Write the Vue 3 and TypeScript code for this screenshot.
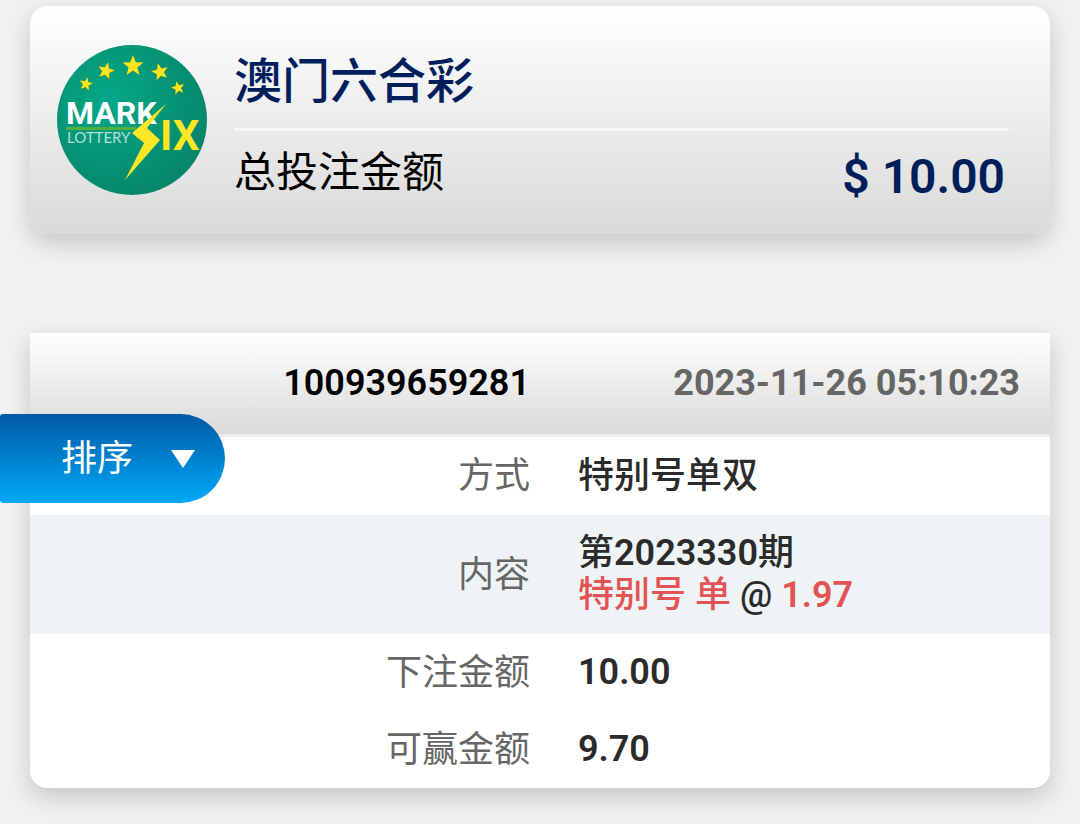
<script setup lang="ts">
interface Star {
  x: number
  y: number
  r: number
  turn: number
}

interface Part {
  text: string
  accent?: boolean
  figure?: boolean
}

interface Row {
  label: string
  lines: Part[][]
}

const stars: Star[] = [
  { x: 29, y: 39, r: 7, turn: 12 },
  { x: 49, y: 26, r: 9, turn: 14 },
  { x: 76, y: 21, r: 11, turn: 0 },
  { x: 103, y: 27, r: 9, turn: -14 },
  { x: 121, y: 43, r: 7, turn: -14 },
]

function starPoints(radius: number): string {
  return Array.from({ length: 10 }, (_, i) => {
    const r = i % 2 === 0 ? radius : radius * 0.42
    const a = (Math.PI * i) / 5 - Math.PI / 2
    return `${(r * Math.cos(a)).toFixed(2)},${(r * Math.sin(a)).toFixed(2)}`
  }).join(' ')
}

const rows: Row[] = [
  { label: '方式', lines: [[{ text: '特别号单双' }]] },
  {
    label: '内容',
    lines: [
      [{ text: '第' }, { text: '2023330', figure: true }, { text: '期' }],
      [
        { text: '特别号 单', accent: true },
        { text: ' @ ' },
        { text: '1.97', accent: true, figure: true },
      ],
    ],
  },
  { label: '下注金额', lines: [[{ text: '10.00', figure: true }]] },
  { label: '可赢金额', lines: [[{ text: '9.70', figure: true }]] },
]
</script>

<template>
  <main class="page">
    <section class="summary">
      <svg class="logo" viewBox="0 0 150 150" role="img" aria-label="Mark Six Lottery">
        <defs>
          <radialGradient id="disc" cx="0.35" cy="0.35" r="0.75">
            <stop offset="0" stop-color="#04a888" />
            <stop offset="1" stop-color="#068468" />
          </radialGradient>
        </defs>
        <circle cx="75" cy="75" r="75" fill="url(#disc)" />
        <polygon
          v-for="s in stars"
          :key="s.x"
          :points="starPoints(s.r)"
          :transform="`translate(${s.x} ${s.y}) rotate(${s.turn})`"
          class="star"
        />
        <text x="9" y="79" class="word-mark">MARK</text>
        <rect x="9" y="82" width="70" height="3" fill="#55ad3d" />
        <text x="10" y="98" class="word-lottery">LOTTERY</text>
        <path d="M109 59 75 88 87 98 68 135 103 95 90 83Z" class="bolt" />
        <text x="103" y="105" class="word-six">IX</text>
      </svg>
      <div class="summary-body">
        <h1 class="game">澳门六合彩</h1>
        <div class="total">
          <span class="total-label">总投注金额</span>
          <strong class="total-value">$ 10.00</strong>
        </div>
      </div>
    </section>

    <table class="bet">
      <thead>
        <tr>
          <th class="bet-id" scope="col">100939659281</th>
          <th class="bet-time" scope="col">2023-11-26 05:10:23</th>
        </tr>
      </thead>
      <tbody>
        <tr v-for="row in rows" :key="row.label">
          <th class="label" scope="row">{{ row.label }}</th>
          <td class="value">
            <div v-for="(line, i) in row.lines" :key="i" class="line"><span v-for="(part, j) in line" :key="j" :class="{ accent: part.accent, figure: part.figure }">{{ part.text }}</span></div>
          </td>
        </tr>
      </tbody>
    </table>

    <button class="sort" type="button">
      <span>排序</span>
      <svg class="caret" viewBox="0 0 24 18" aria-hidden="true"><path d="M0 0H24L12 18Z" fill="#fff" /></svg>
    </button>
  </main>
</template>

<style>
body {
  margin: 0;
  background: #f1f1f1;
}
</style>

<style scoped>
.page {
  position: relative;
  box-sizing: border-box;
  min-height: 100vh;
  padding: 6px 30px 36px;
  font-family: Roboto, "Noto Sans CJK SC", sans-serif;
  font-size: 36px;
  line-height: 42px;
}

.summary {
  display: flex;
  align-items: center;
  gap: 27px;
  box-sizing: border-box;
  min-height: 228px;
  padding: 0 41px 0 27px;
  border-radius: 18px;
  background: linear-gradient(#fff, #dadada);
  box-shadow: 0 9px 24px rgba(0, 0, 0, 0.18);
}

.logo {
  flex: none;
  width: 150px;
  height: 150px;
}

.star {
  fill: #fce51c;
  stroke: #2c8a4c;
  stroke-width: 1;
  paint-order: stroke;
}

.bolt {
  fill: #fde725;
}

.word-mark,
.word-six {
  font-family: Roboto, sans-serif;
  font-weight: 700;
}

.word-mark {
  font-size: 32px;
  fill: #fff;
}

.word-six {
  font-size: 42px;
  fill: #fde725;
}

.word-lottery {
  font-family: Lato, sans-serif;
  font-size: 15px;
  fill: #b5e0d4;
}

.summary-body {
  flex: 1;
  margin-top: 12px;
}

.game {
  margin: 0;
  padding-bottom: 16px;
  border-bottom: 3px solid #f6f6f6;
  color: #001f5c;
  font-size: 48px;
  font-weight: 500;
  line-height: 60px;
}

.total {
  display: flex;
  align-items: center;
  justify-content: space-between;
  padding: 14px 4px 0 0;
  line-height: 48px;
}

.total-label {
  font-size: 42px;
}

.total-value {
  padding-top: 8px;
  color: #001f5c;
  font-size: 48px;
  font-weight: 600;
}

.bet {
  width: 100%;
  margin-top: 99px;
  border-spacing: 0;
  table-layout: fixed;
  border-radius: 0 0 18px 18px;
  background: #fff;
  box-shadow: 0 9px 24px rgba(0, 0, 0, 0.18);
  overflow: hidden;
}

.bet-id,
.bet-time {
  height: 99px;
  padding: 0 30px 2px 0;
  border-bottom: 3px solid #ededed;
  background: linear-gradient(#fff, #dadada) padding-box;
  font-weight: 600;
  text-align: right;
}

.bet-id {
  padding-right: 10px;
}

.bet-time {
  color: #666;
  font-weight: 700;
}

.label {
  padding: 18px 10px 17px 0;
  color: #666;
  font-weight: 400;
  text-align: right;
}

.value {
  padding: 17px 30px 18px 38px;
  color: #2b2b2b;
  font-weight: 500;
}

tbody tr:first-child > * {
  padding-top: 18px;
  padding-bottom: 18px;
}

.line {
  white-space: pre-wrap;
}

.figure {
  font-weight: 600;
}

.accent {
  color: #e45353;
}

tbody tr:nth-child(even) {
  background: #eef3f6;
}

tbody tr:last-child {
  background: #fff;
}

.sort {
  position: absolute;
  top: 414px;
  left: 0;
  display: flex;
  align-items: center;
  gap: 38px;
  height: 89px;
  padding: 0 30px 0 61px;
  border: 0;
  border-radius: 3px 45px 45px 3px;
  background: linear-gradient(#0059a6, #00a9f7);
  color: #fff;
  font: inherit;
}

.caret {
  width: 24px;
  height: 18px;
}
</style>
